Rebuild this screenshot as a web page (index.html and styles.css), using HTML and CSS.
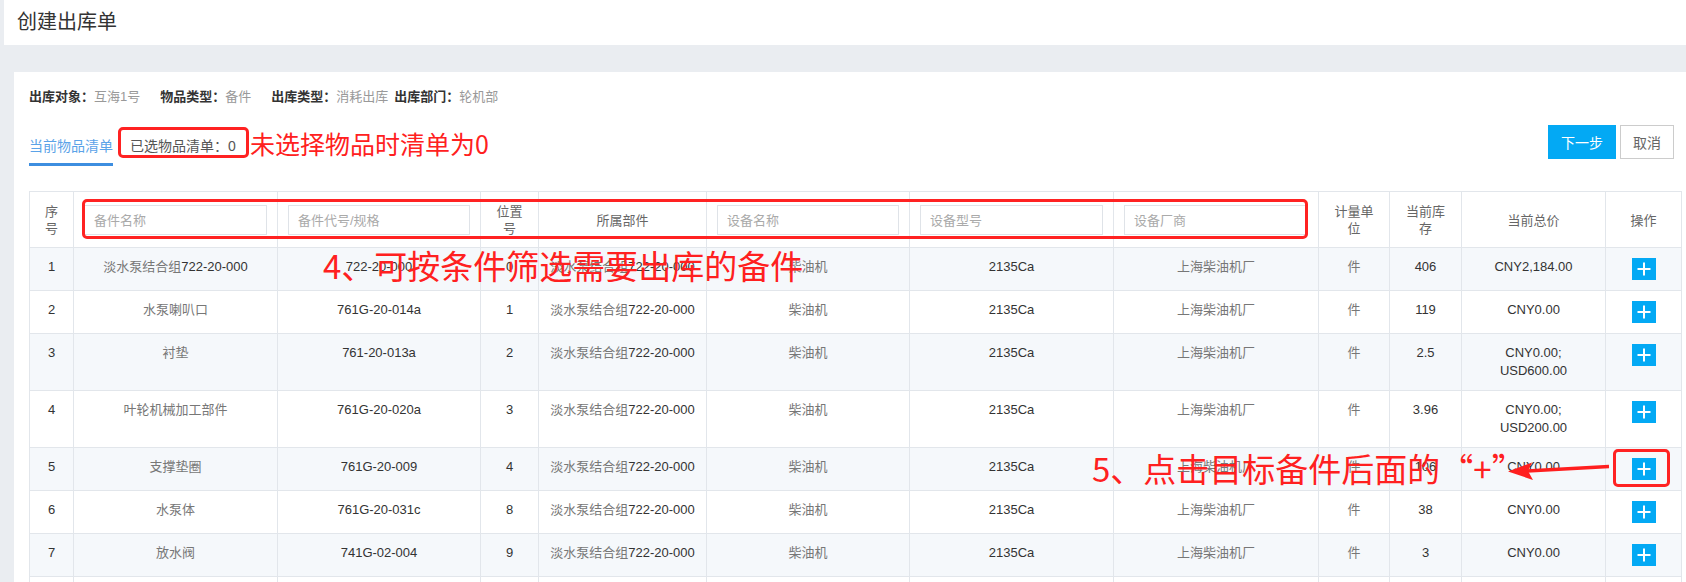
FILE: index.html
```html
<!DOCTYPE html>
<html lang="zh-CN">
<head>
    <meta charset="UTF-8">
    <meta name="viewport" content="width=device-width, initial-scale=1.0">
    <title>创建出库单</title>
    <link rel="stylesheet" href="styles.css">
</head>
<body>
    <div class="page-title">创建出库单</div>

    <div class="card">
        <div class="info">
            <span class="item"><b>出库对象：</b><span class="val">互海1号</span></span>
            <span class="item"><b>物品类型：</b><span class="val">备件</span></span>
            <span class="item tight"><b>出库类型：</b><span class="val">消耗出库</span></span>
            <span class="item"><b>出库部门：</b><span class="val">轮机部</span></span>
        </div>

        <div class="toolbar">
            <div class="tabs">
                <span class="tab active">当前物品清单</span>
                <span class="tab">已选物品清单：0</span>
            </div>
            <div class="actions">
                <button class="btn primary">下一步</button>
                <button class="btn">取消</button>
            </div>
        </div>

        <table class="grid">
            <colgroup>
                <col style="width:44px"><col style="width:204px"><col style="width:203px"><col style="width:58px">
                <col style="width:168px"><col style="width:203px"><col style="width:204px"><col style="width:205px">
                <col style="width:71px"><col style="width:72px"><col style="width:144px"><col style="width:76px">
            </colgroup>
            <thead>
                <tr>
                    <th>序<br>号</th>
                    <th><input class="filter" placeholder="备件名称"></th>
                    <th><input class="filter" placeholder="备件代号/规格"></th>
                    <th>位置<br>号</th>
                    <th>所属部件</th>
                    <th><input class="filter" placeholder="设备名称"></th>
                    <th><input class="filter" placeholder="设备型号"></th>
                    <th><input class="filter" placeholder="设备厂商"></th>
                    <th>计量单<br>位</th>
                    <th>当前库<br>存</th>
                    <th>当前总价</th>
                    <th>操作</th>
                </tr>
            </thead>
            <tbody>
                <tr>
                    <td>1</td><td><span class="cn">淡水泵结合组</span>722-20-000</td><td>722-20-000</td><td>0</td>
                    <td><span class="cn">淡水泵结合组</span>722-20-000</td><td class="cn">柴油机</td><td>2135Ca</td><td class="cn">上海柴油机厂</td>
                    <td class="cn">件</td><td>406</td><td>CNY2,184.00</td><td><button class="add"><svg width="24" height="22" viewBox="0 0 24 22"><path d="M12 4.5v13M5.5 11h13" stroke="#fff" stroke-width="2"/></svg></button></td>
                </tr>
                <tr>
                    <td>2</td><td class="cn">水泵喇叭口</td><td>761G-20-014a</td><td>1</td>
                    <td><span class="cn">淡水泵结合组</span>722-20-000</td><td class="cn">柴油机</td><td>2135Ca</td><td class="cn">上海柴油机厂</td>
                    <td class="cn">件</td><td>119</td><td>CNY0.00</td><td><button class="add"><svg width="24" height="22" viewBox="0 0 24 22"><path d="M12 4.5v13M5.5 11h13" stroke="#fff" stroke-width="2"/></svg></button></td>
                </tr>
                <tr>
                    <td>3</td><td class="cn">衬垫</td><td>761-20-013a</td><td>2</td>
                    <td><span class="cn">淡水泵结合组</span>722-20-000</td><td class="cn">柴油机</td><td>2135Ca</td><td class="cn">上海柴油机厂</td>
                    <td class="cn">件</td><td>2.5</td><td>CNY0.00;<br>USD600.00</td><td><button class="add"><svg width="24" height="22" viewBox="0 0 24 22"><path d="M12 4.5v13M5.5 11h13" stroke="#fff" stroke-width="2"/></svg></button></td>
                </tr>
                <tr>
                    <td>4</td><td class="cn">叶轮机械加工部件</td><td>761G-20-020a</td><td>3</td>
                    <td><span class="cn">淡水泵结合组</span>722-20-000</td><td class="cn">柴油机</td><td>2135Ca</td><td class="cn">上海柴油机厂</td>
                    <td class="cn">件</td><td>3.96</td><td>CNY0.00;<br>USD200.00</td><td><button class="add"><svg width="24" height="22" viewBox="0 0 24 22"><path d="M12 4.5v13M5.5 11h13" stroke="#fff" stroke-width="2"/></svg></button></td>
                </tr>
                <tr>
                    <td>5</td><td class="cn">支撑垫圈</td><td>761G-20-009</td><td>4</td>
                    <td><span class="cn">淡水泵结合组</span>722-20-000</td><td class="cn">柴油机</td><td>2135Ca</td><td class="cn">上海柴油机厂</td>
                    <td class="cn">件</td><td>106</td><td>CNY0.00</td><td><button class="add"><svg width="24" height="22" viewBox="0 0 24 22"><path d="M12 4.5v13M5.5 11h13" stroke="#fff" stroke-width="2"/></svg></button></td>
                </tr>
                <tr>
                    <td>6</td><td class="cn">水泵体</td><td>761G-20-031c</td><td>8</td>
                    <td><span class="cn">淡水泵结合组</span>722-20-000</td><td class="cn">柴油机</td><td>2135Ca</td><td class="cn">上海柴油机厂</td>
                    <td class="cn">件</td><td>38</td><td>CNY0.00</td><td><button class="add"><svg width="24" height="22" viewBox="0 0 24 22"><path d="M12 4.5v13M5.5 11h13" stroke="#fff" stroke-width="2"/></svg></button></td>
                </tr>
                <tr>
                    <td>7</td><td class="cn">放水阀</td><td>741G-02-004</td><td>9</td>
                    <td><span class="cn">淡水泵结合组</span>722-20-000</td><td class="cn">柴油机</td><td>2135Ca</td><td class="cn">上海柴油机厂</td>
                    <td class="cn">件</td><td>3</td><td>CNY0.00</td><td><button class="add"><svg width="24" height="22" viewBox="0 0 24 22"><path d="M12 4.5v13M5.5 11h13" stroke="#fff" stroke-width="2"/></svg></button></td>
                </tr>
                <tr>
                    <td>8</td><td class="cn">叶轮</td><td>761G-20-021</td><td>10</td>
                    <td><span class="cn">淡水泵结合组</span>722-20-000</td><td class="cn">柴油机</td><td>2135Ca</td><td class="cn">上海柴油机厂</td>
                    <td class="cn">件</td><td>2</td><td>CNY0.00</td><td><button class="add"><svg width="24" height="22" viewBox="0 0 24 22"><path d="M12 4.5v13M5.5 11h13" stroke="#fff" stroke-width="2"/></svg></button></td>
                </tr>
            </tbody>
        </table>

        <!-- annotations drawn over the screenshot -->
        <div class="mark mark-tab"></div>
        <div class="note note-tab">未选择物品时清单为0</div>
        <div class="mark mark-filter"></div>
        <div class="note note-filter">4、可按条件筛选需要出库的备件</div>
        <div class="note note-add">5、点击目标备件后面的“+”</div>
        <svg class="arrow" width="110" height="28" viewBox="0 0 110 28">
            <path d="M23 14L105 9.5" stroke="#ff1f1f" stroke-width="3.5" fill="none"/>
            <path d="M4 14.5L28 5.5L24 14L29 23Z" fill="#ff1f1f"/>
        </svg>
        <div class="mark mark-add"></div>
    </div>
</body>
</html>
```

FILE: styles.css
```css
html, body {
    overflow: hidden;
}
body {
    margin: 0;
    background: #eaedf1;
    font-family: "Liberation Sans", "Noto Sans CJK SC", sans-serif;
    color: #333;
}
.page-title {
    margin-left: 4px;
    height: 45px;
    line-height: 45px;
    padding-left: 13px;
    background: #fff;
    font-size: 20px;
    color: #333;
}
.card {
    position: relative;
    margin: 27px 0 0 14px;
    padding: 16px 5px 40px 15px;
    background: #fff;
}
.info {
    display: flex;
    font-size: 13px;
    line-height: 18px;
    margin-bottom: 19px;
}
.info b {
    color: #333;
}
.info .val {
    color: #999;
}
.info .item {
    margin-right: 20px;
}
.info .item.tight {
    margin-right: 6px;
}
.toolbar {
    display: flex;
    justify-content: space-between;
    align-items: flex-start;
}
.tabs {
    display: flex;
    margin-top: 11px;
}
.tab {
    font-size: 14px;
    line-height: 20px;
    padding-bottom: 7px;
    color: #555;
}
.tab.active {
    color: #5ba3e8;
    border-bottom: 3px solid #3d8ee0;
}
.tab + .tab {
    margin-left: 17px;
}
.actions {
    display: flex;
    gap: 4px;
    margin-right: 7px;
}
.btn {
    height: 34px;
    padding: 0 12px;
    font-family: inherit;
    font-size: 14px;
    color: #666;
    background: #fff;
    border: 1px solid #ccc;
}
.btn.primary {
    color: #fff;
    background: #03a9f4;
    border-color: #03a9f4;
}
.grid {
    width: 100%;
    margin-top: 25px;
    border-collapse: collapse;
    table-layout: fixed;
    font-size: 13px;
}
.grid th, .grid td {
    border: 1px solid #e2e6eb;
    text-align: center;
}
.grid th {
    padding: 11px 10px 10px;
    line-height: 17px;
    font-weight: normal;
    color: #666;
    background: #fff;
}
.grid td {
    padding: 10px 8px;
    line-height: 18px;
    vertical-align: top;
    color: #333;
}
.grid tbody tr:nth-child(odd) {
    background: #f5f8fb;
}
.grid .cn {
    color: #777;
}
.filter {
    display: block;
    width: 100%;
    height: 30px;
    box-sizing: border-box;
    padding: 0 9px;
    border: 1px solid #dfe3e8;
    font-family: inherit;
    font-size: 13px;
    background: #fff;
}
.filter::placeholder {
    color: #aaa;
}
.add {
    display: block;
    width: 24px;
    height: 22px;
    margin: 0 auto;
    padding: 0;
    border: 0;
    background: #03a9f4;
}
.add svg {
    display: block;
}
.mark {
    position: absolute;
    box-sizing: border-box;
    border: 3px solid #ff2222;
    border-radius: 5px;
}
.note {
    position: absolute;
    color: #ff2020;
    font-family: "Noto Sans CJK SC", sans-serif;
    white-space: nowrap;
}
.mark-tab {
    left: 104px;
    top: 55px;
    width: 131px;
    height: 31px;
}
.note-tab {
    left: 236px;
    top: 56px;
    font-size: 25px;
    line-height: 30px;
}
.mark-filter {
    left: 68px;
    top: 127px;
    width: 1226px;
    height: 40px;
}
.note-filter {
    left: 309px;
    top: 175px;
    font-size: 33px;
    line-height: 36px;
}
.note-add {
    left: 1078px;
    top: 378px;
    font-size: 33px;
    line-height: 36px;
}
.mark-add {
    left: 1599px;
    top: 377px;
    width: 57px;
    height: 38px;
}
.arrow {
    position: absolute;
    left: 1490px;
    top: 385px;
}
```
